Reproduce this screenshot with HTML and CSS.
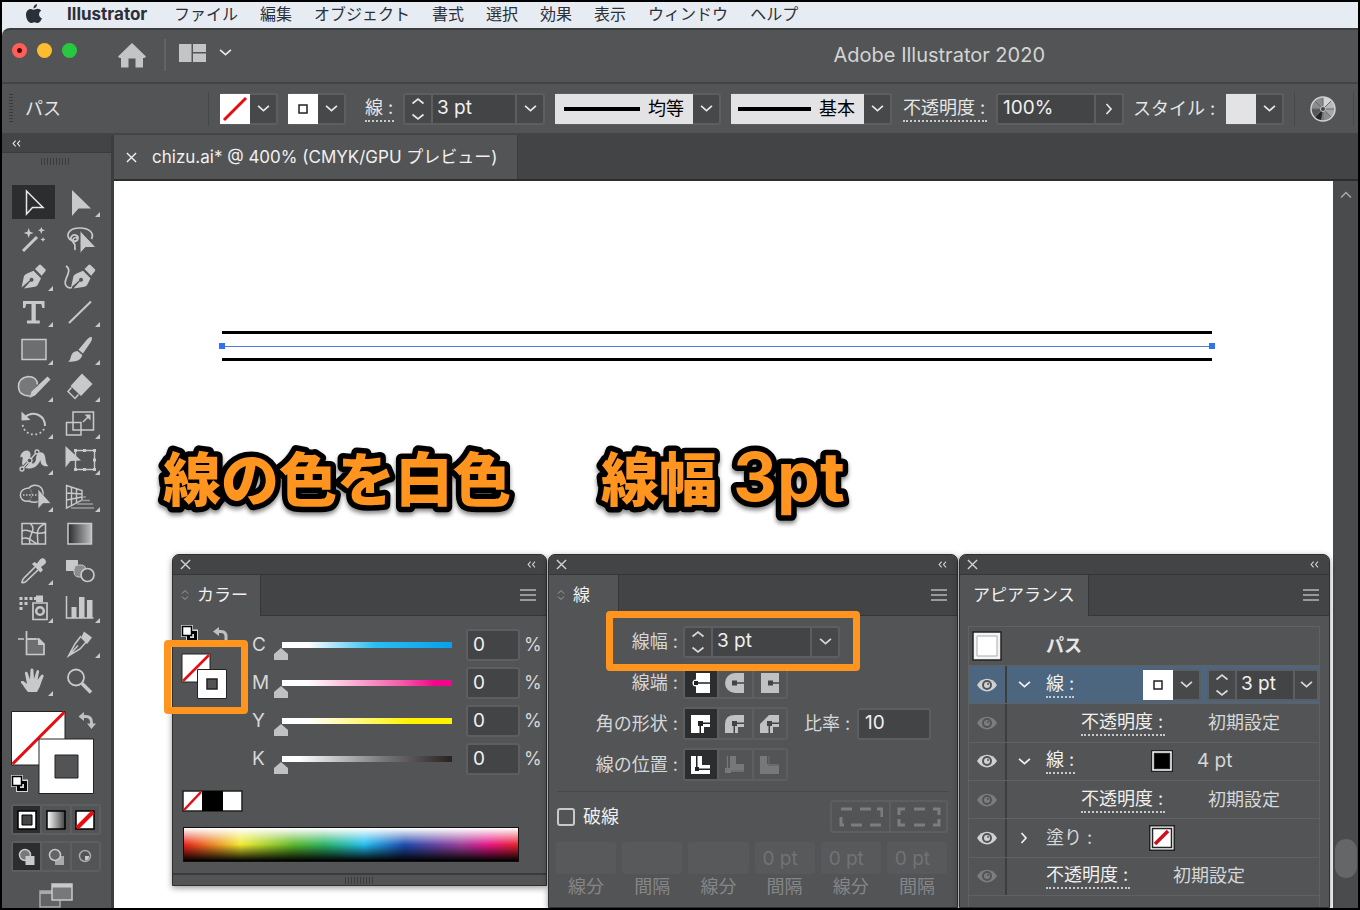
FILE: index.html
```html
<!DOCTYPE html>
<html lang="ja">
<head>
<meta charset="utf-8">
<title>Adobe Illustrator 2020</title>
<link rel="stylesheet" href="styles.css">
</head>
<body>
<svg class="defs" aria-hidden="true">
  <defs>
    <linearGradient id="gray"><stop offset="0" stop-color="#2a2b2c"/><stop offset="1" stop-color="#bdbebf"/></linearGradient>
    <linearGradient id="white-black"><stop offset="0" stop-color="#fff"/><stop offset="1" stop-color="#444"/></linearGradient>
    <symbol id="down" viewBox="0 0 12 8"><path d="M1 1.500 6 6l5-4.500" fill="none" stroke="currentColor" stroke-width="1.600"/></symbol>
    <symbol id="right" viewBox="0 0 8 12"><path d="M1.500 1 6 6l-4.500 5" fill="none" stroke="currentColor" stroke-width="1.700"/></symbol>
    <symbol id="step" viewBox="0 0 14 24"><path d="M1.500 6.500 7 2l5.500 4.500M1.500 17.500 7 22l5.500-4.500" fill="none" stroke="currentColor" stroke-width="1.700"/></symbol>
    <symbol id="close" viewBox="0 0 12 12"><path d="m1 1 10 10M11 1 1 11" stroke="currentColor" stroke-width="1.500"/></symbol>
    <symbol id="fold" viewBox="0 0 10 8"><path d="M4 .8 1.200 4 4 7.200M9 .8 6.200 4 9 7.200" fill="none" stroke="currentColor" stroke-width="1.300"/></symbol>
    <symbol id="menu" viewBox="0 0 16 12"><path d="M0 1h16M0 6h16M0 11h16" stroke="currentColor" stroke-width="1.500"/></symbol>
    <symbol id="sort" viewBox="0 0 8 12"><path d="M1 4.500 4 1.500l3 3M1 7.500l3 3 3-3" fill="none" stroke="currentColor"/></symbol>
    <symbol id="eye" viewBox="0 0 20 14"><path d="M0 7C5-1.500 15-1.500 20 7 15 15.500 5 15.500 0 7Z" fill="currentColor"/><circle cx="10" cy="7" r="5" fill="#535456"/><circle cx="10" cy="7" r="3" fill="currentColor"/><circle cx="11" cy="6" r="1" fill="#535456"/></symbol>
    <symbol id="corner" viewBox="0 0 5 5"><path d="M5 0v5H0z" fill="#c8c9ca"/></symbol>
    <symbol id="swap" viewBox="0 0 18 18"><path d="M5 4.500h3c4 0 5.500 2 5.500 6V13" fill="none" stroke="#bfc0c1" stroke-width="3"/><path d="M6 0v9L.5 4.500zM9 11.500h9L13.500 17z" fill="#bfc0c1"/></symbol>
    <symbol id="default" viewBox="0 0 17 17"><path d="M0 0h12v4.500h5V17H5v-5H0z" fill="#d6d7d8"/><path d="M6 6h10v10H6z" fill="#000"/><path d="M9 9h4v4H9z" fill="#d6d7d8"/><path d="M1.500 1.500h9v9h-9z" fill="#fff" stroke="#000" stroke-width="1.500"/></symbol>
    <symbol id="fillstroke" viewBox="0 0 84 84"><path d="M.5.500H54V54H.5z" fill="#fff" stroke="#222"/><path d="m1.500 53 52-52" stroke="#e80b0f" stroke-width="3"/><path d="M28 28h54.500v54.500H28z" fill="#fff" stroke="#222"/><path d="M44 44h23v23H44z" fill="#535456" stroke="#222"/></symbol>
    <symbol id="pen" viewBox="0 0 26 26"><path d="M1 24.500 3.500 13q.8-1.500 3-2.500L13 7.800l7.500 7.500-3 6q-1 2-3 2.500L3.500 25.500l6.300-7q3 .8 3.300-1.500-.2-2.500-2.500-2.200-2 .5-1.500 2.700z" fill="#c8c9ca"/><path d="m14.500 6 4-4q1-.8 2 0l4.300 4.300q.8 1 0 2l-3.600 4.500z" fill="#c8c9ca"/></symbol>
  </defs>
</svg>

<div class="frame">
  <nav class="menubar">
    <svg class="apple" viewBox="0 0 16 20"><path d="M11 0c.2 2.500-1.700 4.400-3.500 4.400C7.300 2.200 9 .3 11 0ZM8 5.800c1 0 2-1 3.700-1 1.500 0 2.800.8 3.500 2-3.200 2-2.600 6.300.7 7.500-.8 2.200-2.400 4.700-4.200 4.700-1.200 0-1.700-.8-3.300-.8s-2.200.8-3.300.8C2.700 19 0 15 0 10.800 0 7.200 2.200 4.900 4.700 4.900c1.500 0 2.300.9 3.300.9Z" fill="#2b2f3a"/></svg>
    <a class="app" href="#">Illustrator</a><a href="#">ファイル</a><a href="#">編集</a><a href="#">オブジェクト</a><a href="#">書式</a><a href="#">選択</a><a href="#">効果</a><a href="#">表示</a><a href="#">ウィンドウ</a><a href="#">ヘルプ</a>
  </nav>

  <div class="window">
    <header class="titlebar">
      <div class="lights"><button class="red" aria-label="閉じる"></button><button class="yellow" aria-label="最小化"></button><button class="green" aria-label="拡大"></button></div>
      <button class="home" aria-label="ホーム"><svg width="28" height="25" viewBox="0 0 28 25"><path d="M14 0 28 13.500 26.500 15H25v9.500h-7.500v-9h-7v9H3V15H1.500L0 13.500z" fill="#c3c4c5"/></svg></button>
      <button class="layout" aria-label="ワークスペース"><svg width="27" height="18" viewBox="0 0 27 18"><path d="M0 0h12.500v18H0zM14 0h13v8H14zM14 9.500h13V18H14z" fill="#c3c4c5"/></svg><svg class="down"><use href="#down"/></svg></button>
      <h1>Adobe Illustrator 2020</h1>
    </header>

    <div class="control">
      <span class="vgrip"></span>
      <span class="kind">パス</span>
      <div class="combo"><svg class="chip" viewBox="0 0 30 30"><path d="M0 0h30v30H0z" fill="#fff"/><path d="M4 26 26 4" stroke="#e80b0f" stroke-width="3"/></svg><button aria-label="塗り"><svg class="down"><use href="#down"/></svg></button></div>
      <div class="combo gap"><svg class="chip" viewBox="0 0 30 30"><path d="M0 0h30v30H0z" fill="#fff"/><path d="M11 11h8v8h-8z" fill="none" stroke="#222" stroke-width="1.500"/></svg><button aria-label="線の色"><svg class="down"><use href="#down"/></svg></button></div>
      <label class="dotted weight-label" for="weight">線 :</label>
      <div class="combo"><button aria-label="増減"><svg class="step"><use href="#step"/></svg></button><input class="w86" id="weight" value="3 pt"><button aria-label="線幅の一覧"><svg class="down"><use href="#down"/></svg></button></div>
      <div class="combo gap"><span class="profile"><i></i>均等</span><button aria-label="プロファイル"><svg class="down"><use href="#down"/></svg></button></div>
      <div class="combo gap"><span class="profile brush"><i></i>基本</span><button aria-label="ブラシ"><svg class="down"><use href="#down"/></svg></button></div>
      <label class="dotted opacity-label" for="opacity">不透明度 :</label>
      <div class="combo"><input class="w98" id="opacity" value="100%"><button aria-label="不透明度の一覧"><svg class="right"><use href="#right"/></svg></button></div>
      <span class="style-label">スタイル :</span>
      <div class="combo"><svg class="chip" viewBox="0 0 30 30"><path d="M0 0h30v30H0z" fill="#e3e3e5"/></svg><button aria-label="スタイル"><svg class="down"><use href="#down"/></svg></button></div>
      <button class="wheel" aria-label="オブジェクトを再配色"><svg width="26" height="26" viewBox="0 0 26 26"><circle cx="13" cy="13" r="12" fill="#8b8c8d"/><path d="M13 13 13 1a12 12 0 0 1 8.500 3.500z" fill="#d4d5d6"/><path d="m13 13 8.500-8.500A12 12 0 0 1 25 13z" fill="#b7b8b9"/><path d="M13 13H25a12 12 0 0 1-4 9z" fill="#a5a6a7"/><path d="M13 13 4 21a12 12 0 0 0 7 4z" fill="#252627"/><path d="M13 13 1 13a12 12 0 0 0 3 8z" fill="#555657"/><path d="M13 1v24M1 13h24M4.500 4.500l17 17M4.500 21.500l17-17" stroke="#66686a"/><circle cx="13" cy="13" r="12" fill="none" stroke="#d0d1d2" stroke-width="1.500"/><circle cx="13" cy="13" r="2.500" fill="#444" stroke="#ccc"/></svg></button>
    </div>

    <div class="main">
      <aside class="tools">
        <button class="collapse" aria-label="折りたたむ"><svg class="fold"><use href="#fold"/></svg></button>
        <span class="hgrip"></span>
        <div class="toolgrid">
          <button class="on" aria-label="選択"><svg viewBox="0 0 46 36"><path d="M16.500 7v23l6-6.500h10.500z" fill="none" stroke="#e8e8e8" stroke-width="1.500"/></svg></button>
          <button aria-label="ダイレクト選択"><svg viewBox="0 0 46 36"><path d="M15 6v26l6.500-7.500H34z" fill="#c8c9ca"/><use href="#corner" x="38" y="28" width="5" height="5"/></svg></button>
          <button aria-label="自動選択"><svg viewBox="0 0 46 36"><path d="m13 30 14-14" stroke="#c8c9ca" stroke-width="3"/><path d="m18.700 7 1.300 3.700 3.700 1.300-3.700 1.300-1.300 3.700-1.300-3.700-3.700-1.300 3.700-1.300zM31.300 6l1 2.300 2.700 1-2.700 1-1 2.700-1-2.700-2.300-1 2.300-1zM33 16l.8 1.800 1.800.7-1.800.7L33 21l-.8-1.800-1.800-.7 1.800-.7z" fill="#c8c9ca"/></svg></button>
          <button aria-label="なげなわ"><svg viewBox="0 0 46 36"><path d="M34.500 18c3-6-2-11-12-11-9 0-13 5-11 9.500s9 4.500 9.500 1-4.500-5-6.500-2 1 6 4 5 2.500-4 0-4-4 4-1.500 6-.5 4 1.500 6.500" fill="none" stroke="#c8c9ca" stroke-width="1.700"/><path d="M23 9.500v23l5.500-6H39z" fill="#c8c9ca" stroke="#535456"/></svg></button>
          <button aria-label="ペン"><svg viewBox="0 0 46 36"><use href="#pen" x="10.500" y="5" width="26" height="26"/><use href="#corner" x="38" y="28" width="5" height="5"/></svg></button>
          <button aria-label="曲線"><svg viewBox="0 0 46 36"><use href="#pen" x="13" y="5" width="26" height="26"/><path d="M9 8c5 3 2 8 0 13s0 10 6 8.500" fill="none" stroke="#c8c9ca" stroke-width="1.700"/></svg></button>
          <button aria-label="文字"><svg viewBox="0 0 46 36"><path d="M13 7h21.500v7h-2.200l-1-4h-5.500v16.500h4v3H17v-3h4.500V10H16.200l-1 4H13z" fill="#c8c9ca"/><use href="#corner" x="38" y="28" width="5" height="5"/></svg></button>
          <button aria-label="直線"><svg viewBox="0 0 46 36"><path d="m12 29 22-21.500" stroke="#c8c9ca" stroke-width="2"/><use href="#corner" x="38" y="28" width="5" height="5"/></svg></button>
          <button aria-label="長方形"><svg viewBox="0 0 46 36"><path d="M12 8.500h24v20H12z" fill="#6d6e6f" stroke="#c8c9ca" stroke-width="1.500"/><use href="#corner" x="38" y="29" width="5" height="5"/></svg></button>
          <button aria-label="ブラシ"><svg viewBox="0 0 46 36"><path d="M34.500 6c1 1 .5 3-1 5.500L26 22.500l-4.500-3.800L30 8.500Q33.500 5 34.500 6zM20.500 20l4.700 4c-.5 5-7 7.500-14.200 6.500 3-1.500 2-4 4-7.500 1.500-2.300 3.500-3 5.500-3z" fill="#c8c9ca"/><use href="#corner" x="38" y="29" width="5" height="5"/></svg></button>
          <button aria-label="Shaper"><svg viewBox="0 0 46 36"><path d="M20 28q-11 0-11.500-9T18 8.500q9 0 9.500 8" fill="#77787a" stroke="#c8c9ca" stroke-width="1.500"/><path d="m37.500 8.500 3 3L25 27.500l-5.500 2.500 2-6.500z" fill="#c8c9ca"/><use href="#corner" x="38" y="29" width="5" height="5"/></svg></button>
          <button aria-label="消しゴム"><svg viewBox="0 0 46 36"><path d="m25 5.500 10.500 10.500L24 28 13.500 18z" fill="#c8c9ca"/><path d="m14.500 19.500-3.500 4 7 7 3.500-4" fill="none" stroke="#c8c9ca" stroke-width="1.500"/><use href="#corner" x="38" y="29" width="5" height="5"/></svg></button>
          <button aria-label="回転"><svg viewBox="0 0 46 36"><path d="M15 12c8-7 20-2 20 9" fill="none" stroke="#c8c9ca" stroke-width="2"/><path d="M11.500 6.500v9l9-.5z" fill="#c8c9ca"/><path d="M34 24c-4 8-20 8-21.500-5" fill="none" stroke="#c8c9ca" stroke-width="1.800" stroke-dasharray="1.800 2.600"/><use href="#corner" x="38" y="29" width="5" height="5"/></svg></button>
          <button aria-label="拡大・縮小"><svg viewBox="0 0 46 36"><path d="M16 7h20.500v18H16zM9.500 17.500H24V30H9.500zM26 17l6-6" fill="none" stroke="#c8c9ca" stroke-width="1.500"/><path d="M27.500 9.500H33.500v6z" fill="#c8c9ca"/><use href="#corner" x="38" y="29" width="5" height="5"/></svg></button>
          <button aria-label="線幅"><svg viewBox="0 0 46 36"><path d="M10.500 17c-1-6 7-10 9.500-5.500 1.500 3-1 7 1 10 2 2.500 5 0 5-4s4-8.500 7.500-5c3 3 1 10 5 12.500-5 1-8-1-8-6-3 7-8 9-12.500 8.500S11 24 12.500 19c.8-3-1-4.500-2-2z" fill="#c8c9ca"/><path d="m12 28 15-17" stroke="#535456" stroke-width="3"/><path d="m12 28 15-17" stroke="#c8c9ca" stroke-width="1.300"/><g fill="#535456" stroke="#c8c9ca" stroke-width="1.300"><circle cx="12" cy="28" r="2"/><circle cx="19.500" cy="19.500" r="2.500"/><circle cx="27" cy="11" r="2"/></g><use href="#corner" x="38" y="29" width="5" height="5"/></svg></button>
          <button aria-label="自由変形"><svg viewBox="0 0 46 36"><path d="M18.500 9.500h19v19h-19z" fill="none" stroke="#c8c9ca" stroke-width="1.400"/><path d="M17 8h3v3h-3zM26 8h3v3h-3zM36 8h3v3h-3zM36 17.500h3v3h-3zM36 27h3v3h-3zM26 27h3v3h-3zM17 27h3v3h-3z" fill="#c8c9ca"/><path d="M8.500 5v21.500l5-6.500 10.500-.5z" fill="#c8c9ca"/><use href="#corner" x="38" y="29" width="5" height="5"/></svg></button>
          <button aria-label="シェイプ形成"><svg viewBox="0 0 46 36"><path d="M19 10c4-5 13-3 14 4s-6 13-14 9C8 25 7 10 19 10z" fill="none" stroke="#c8c9ca" stroke-width="1.500"/><path d="M19 10q6 6 0 13" fill="none" stroke="#999a9b" stroke-dasharray="2 1"/><path d="M13 17h15" stroke="#c8c9ca" stroke-width="1.500" stroke-dasharray="1.500 1.500"/><path d="M28 11v20l5-5.500h8z" fill="#c8c9ca" stroke="#535456" stroke-width=".7"/><use href="#corner" x="38" y="29" width="5" height="5"/></svg></button>
          <button aria-label="遠近グリッド"><svg viewBox="0 0 46 36"><path d="m9.500 7.500 15.500 5v9.500L9.500 30zM14.500 9v18.500M19.500 10.500V25M9.500 15l15.500 1M9.500 22l15.500-3" fill="none" stroke="#c8c9ca" stroke-width="1.400"/><path d="M26 19h3M24 22.500h9M20 26h16M14 30h23" stroke="#999a9b" stroke-width="1.500"/><use href="#corner" x="38" y="29" width="5" height="5"/></svg></button>
          <button aria-label="メッシュ"><svg viewBox="0 0 46 36"><path d="M12 8.500h23.500v20.500H12zM12 16c7-4 11 6 23.500 1M12 24c5-4 12 4 16 5M20 8.500c8 6-3 12 0 20.500M35 9c-9 3-8 9-7 20" fill="none" stroke="#c8c9ca" stroke-width="1.500"/></svg></button>
          <button aria-label="グラデーション"><svg viewBox="0 0 46 36"><path d="M11 8.500h23.500V29H11z" fill="url(#gray)" stroke="#c8c9ca" stroke-width="1.500"/></svg></button>
          <button aria-label="スポイト"><svg viewBox="0 0 46 36"><path d="m25 15-11 11q-2 2-2 4.500 2.500.5 4.500-1.500L28 18" fill="none" stroke="#c8c9ca" stroke-width="1.700"/><path d="m22 12 2.500-2 2.500 1.500 3-4Q33 5 35 7.500t0 4.500L31 15l2 3-2.500 2.500z" fill="#c8c9ca"/><use href="#corner" x="38" y="28" width="5" height="5"/></svg></button>
          <button aria-label="ブレンド"><svg viewBox="0 0 46 36"><path d="M9 8h12v11H9z" fill="#c8c9ca"/><rect x="17" y="13" width="12" height="12" rx="4.500" fill="#8b8c8d" stroke="#c8c9ca"/><circle cx="30.500" cy="23" r="6.500" fill="#535456" stroke="#c8c9ca" stroke-width="1.700"/></svg></button>
          <button aria-label="シンボルスプレー"><svg viewBox="0 0 46 36"><path d="M23 14h14v16.500H23z" fill="none" stroke="#c8c9ca" stroke-width="1.700"/><path d="M24 8h2V6.500h7V13h-7v-2h-2z" fill="#c8c9ca"/><circle cx="30" cy="22" r="3.800" fill="none" stroke="#c8c9ca" stroke-width="2.500"/><path d="M9.500 8h3v3h-3zM14.500 8h3v3h-3zM19.500 8h3v3h-3zM9.500 13h3v3h-3zM14.500 13h3v3h-3zM9.500 18h3v3h-3z" fill="#c8c9ca"/><use href="#corner" x="38" y="29" width="5" height="5"/></svg></button>
          <button aria-label="棒グラフ"><svg viewBox="0 0 46 36"><path d="M9.500 7v22h27" fill="none" stroke="#c8c9ca" stroke-width="1.500"/><path d="M14.500 18h5v11h-5zM22 8h5.500v21H22zM30 11h5.500v18H30z" fill="#c8c9ca"/><use href="#corner" x="38" y="29" width="5" height="5"/></svg></button>
          <button aria-label="アートボード"><svg viewBox="0 0 46 36"><path d="M16.500 6v23.500h17.500V19l-5-5H16.500" fill="#6d6e6f" stroke="#c8c9ca" stroke-width="1.700"/><path d="M8 14h6M18 14h8" stroke="#c8c9ca" stroke-width="1.500"/><path d="M28 13v7h7z" fill="#c8c9ca"/></svg></button>
          <button aria-label="スライス"><svg viewBox="0 0 46 36"><path d="M24 11 18 19 11.500 31 23 24l6.500-7.500M12 30.500l9-10" fill="none" stroke="#c8c9ca" stroke-width="1.500"/><path d="m27 6.500 8 6-5 6.500-6-6z" fill="#c8c9ca"/><use href="#corner" x="38" y="28" width="5" height="5"/></svg></button>
          <button aria-label="手のひら"><svg viewBox="0 0 46 36"><path d="M18 30c-3-3-4.500-7-7-9-.8-2 1.500-2.500 3-1.500l3 2.500L15 11.500c-.5-2 2-2.500 2.700-.5L20 17.500 20.500 8c.2-2 2.700-2 2.900 0L24 17l2.500-8c.8-1.800 3-1 2.600.8L27.500 18l3.700-5c1.200-1.300 3 0 2.300 1.700-2.500 5-3 9.500-5 12.300l-1.500 3z" fill="#c8c9ca"/><use href="#corner" x="38" y="29" width="5" height="5"/></svg></button>
          <button aria-label="ズーム"><svg viewBox="0 0 46 36"><circle cx="19" cy="15.500" r="8" fill="none" stroke="#c8c9ca" stroke-width="1.800"/><path d="m25 21.500 9 9" stroke="#c8c9ca" stroke-width="3.500"/></svg></button>
        </div>
        <svg class="swatchset" viewBox="0 0 92 86"><use href="#fillstroke" x="1" y="1" width="84" height="84"/><use href="#swap" x="68" y="2" width="18" height="18"/><use href="#default" x="1" y="65" width="17" height="17"/></svg>
        <div class="triple">
          <button class="on" aria-label="カラー"><svg viewBox="0 0 20 20"><path d="M1 1h18v18H1z" fill="#fff" stroke="#000" stroke-width="1.500"/><path d="M5 5h10v10H5z" fill="#444" stroke="#000"/></svg></button>
          <button aria-label="グラデーション"><svg viewBox="0 0 20 20"><path d="M1 1h18v18H1z" fill="url(#white-black)" stroke="#000" stroke-width="1.500"/></svg></button>
          <button aria-label="なし"><svg viewBox="0 0 20 20"><path d="M1 1h18v18H1z" fill="#fff" stroke="#000" stroke-width="1.500"/><path d="M2 18 18 2" stroke="#e80b0f" stroke-width="4"/></svg></button>
        </div>
        <div class="triple modes">
          <button class="on" aria-label="標準描画"><svg viewBox="0 0 20 20"><circle cx="8" cy="8" r="5.500" fill="#77787a" stroke="#c8c9ca" stroke-width="1.500"/><path d="M8.500 9h9v9h-9z" fill="#c8c9ca"/></svg></button>
          <button aria-label="背面描画"><svg viewBox="0 0 20 20"><path d="M9 9h9v9H9z" fill="#a8a9aa"/><circle cx="9" cy="8" r="5.500" fill="#636465" stroke="#c8c9ca" stroke-width="1.500"/></svg></button>
          <button aria-label="内側描画"><svg viewBox="0 0 20 20"><circle cx="10" cy="9" r="5.500" fill="none" stroke="#a8a9aa" stroke-width="1.500"/><path d="M10 9h4v2q-1 2-4 2.500z" fill="#c8c9ca"/></svg></button>
        </div>
        <button class="screen" aria-label="スクリーンモード"><svg width="34" height="25" viewBox="0 0 34 25"><path d="M1 8h20v16H1z" fill="#636465" stroke="#a8a9aa" stroke-width="1.500"/><path d="M1 8h20v3H1z" fill="#a8a9aa"/><path d="M13 1h20v16H13z" fill="#77787a" stroke="#c8c9ca" stroke-width="1.500"/><path d="M13 1h20v3.500H13z" fill="#c8c9ca"/></svg></button>
      </aside>

      <section class="doc">
        <div class="doctabs"><div class="doctab"><button aria-label="閉じる"><svg class="close"><use href="#close"/></svg></button><span>chizu.ai* @ 400% (CMYK/GPU プレビュー)</span></div></div>
        <div class="docbody">
          <div class="canvas">
            <div class="art"><i class="anchor"></i><i class="segment"></i><i class="anchor"></i></div>
            <div class="notes">
              <svg width="350" height="80"><text x="0" y="61">線の色を白色</text></svg>
              <svg width="260" height="80"><text x="0" y="61">線幅<tspan class="latin"> 3pt</tspan></text></svg>
            </div>

            <div class="panels">
              <section class="panel color">
                <div class="panelbar"><button aria-label="閉じる"><svg class="close"><use href="#close"/></svg></button><button aria-label="折りたたむ"><svg class="fold"><use href="#fold"/></svg></button></div>
                <div class="paneltabs"><h2><svg class="sort"><use href="#sort"/></svg>カラー</h2><button aria-label="メニュー"><svg class="menu"><use href="#menu"/></svg></button></div>
                <div class="mixer">
                  <div class="mixswatch"><div><svg width="17" height="17"><use href="#default"/></svg><svg width="16" height="16" viewBox="0 0 16 16"><path d="M5 6.500h3q5 0 5 5V16" fill="none" stroke="#bfc0c1" stroke-width="3"/><path d="M6 2v9L0 6.500z" fill="#bfc0c1"/></svg></div>
                    <svg width="47" height="47" viewBox="0 0 47 47"><path d="M1 1h28v28H1z" fill="#fff" stroke="#222"/><path d="M2 28 28 2" stroke="#e80b0f" stroke-width="2.500"/><path d="M16.500 16.500h29v29h-29z" fill="#fff" stroke="#222"/><path d="M26 26h10v10H26z" fill="#535456" stroke="#222" stroke-width="1.500"/></svg></div>
                  <div class="channels">
                    <div><label for="c">C</label><input type="range" class="c" value="0" aria-label="C"><input id="c" value="0"><span>%</span></div>
                    <div><label for="m">M</label><input type="range" class="m" value="0" aria-label="M"><input id="m" value="0"><span>%</span></div>
                    <div><label for="y">Y</label><input type="range" class="y" value="0" aria-label="Y"><input id="y" value="0"><span>%</span></div>
                    <div><label for="k">K</label><input type="range" class="k" value="0" aria-label="K"><input id="k" value="0"><span>%</span></div>
                  </div>
                </div>
                <svg class="basics" width="61" height="22" viewBox="0 0 61 22"><path d="M1 1h59v20H1z" fill="#fff" stroke="#222" stroke-width="1.500"/><path d="M2 20 19 2" stroke="#e80b0f" stroke-width="2.500"/><path d="M20 1h21v20H20z" fill="#000"/></svg>
                <div class="spectrum"></div>
                <div class="resize"><span class="hgrip"></span></div>
              </section>

              <section class="panel stroke">
                <div class="panelbar"><button aria-label="閉じる"><svg class="close"><use href="#close"/></svg></button><button aria-label="折りたたむ"><svg class="fold"><use href="#fold"/></svg></button></div>
                <div class="paneltabs"><h2><svg class="sort"><use href="#sort"/></svg>線</h2><button aria-label="メニュー"><svg class="menu"><use href="#menu"/></svg></button></div>
                <div class="strokegrid">
                  <label for="sw">線幅 :</label>
                  <div class="combo"><button aria-label="増減"><svg class="step"><use href="#step"/></svg></button><input class="w101" id="sw" value="3 pt"><button aria-label="一覧"><svg class="down"><use href="#down"/></svg></button></div>
                  <span>線端 :</span>
                  <div class="trio">
                    <button class="on" aria-label="線端なし"><svg viewBox="0 0 20 20"><path d="M5 0h14v20H5v-6.500a3.500 3.500 0 0 1 0-7z" fill="#fff"/><path d="M3 8h4v1.300h12v1.400H7V12H3z" fill="#222"/></svg></button>
                    <button aria-label="丸型線端"><svg viewBox="0 0 20 20"><path d="M19 0H10a10 10 0 0 0 0 20h9z" fill="#c0c1c2"/><path d="M7 7.500h5v1.800h7v1.400h-7v1.800H7z" fill="#444"/></svg></button>
                    <button aria-label="突出線端"><svg viewBox="0 0 20 20"><path d="M1 0h18v20H1z" fill="#c0c1c2"/><path d="M8 7.500h5v1.800h6v1.400h-6v1.800H8z" fill="#444"/></svg></button>
                  </div>
                  <span>角の形状 :</span>
                  <div class="joinrow"><div class="trio">
                    <button class="on" aria-label="マイター結合"><svg viewBox="0 0 20 20"><path d="M0 1h19v12h-6v6H0z" fill="#fff"/><path d="M7 7h5v1.500h7v1.400h-7V12h-2v7H8.500v-7H7z" fill="#222"/></svg></button>
                    <button aria-label="ラウンド結合"><svg viewBox="0 0 20 20"><path d="M0 19v-9q0-9 10-9h9v12h-6v6z" fill="#c0c1c2"/><path d="M7 7h5v1.500h7v1.400h-7V12h-2v7H8.500v-7H7z" fill="#444"/></svg></button>
                    <button aria-label="ベベル結合"><svg viewBox="0 0 20 20"><path d="M0 19v-9l9-9h10v12h-6v6z" fill="#c0c1c2"/><path d="M7 7h5v1.500h7v1.400h-7V12h-2v7H8.500v-7H7z" fill="#444"/></svg></button>
                  </div><label for="ratio">比率 :</label><input id="ratio" value="10"></div>
                  <span>線の位置 :</span>
                  <div class="trio">
                    <button class="on" aria-label="中央"><svg viewBox="0 0 20 20"><path d="M0 1h11v9h8v9H0z" fill="#fff"/><path d="M5 1h1.500v11H8v1.500h11V15H8v1H4v-4h1z" fill="#222"/></svg></button>
                    <button aria-label="内側" disabled><svg viewBox="0 0 20 20"><path d="M5 1h6v8h8v6H5z" fill="#77787a"/><path d="M2.500 1v15H19" fill="none" stroke="#77787a" stroke-width="1.300"/><path d="M0 13h6v5H0z" fill="#77787a"/></svg></button>
                    <button aria-label="外側" disabled><svg viewBox="0 0 20 20"><path d="M0 1h7v8h12v10H0z" fill="#77787a"/><path d="M9 1v9h10" fill="none" stroke="#656667" stroke-width="1.500"/></svg></button>
                  </div>
                </div>
                <div class="dash">
                  <label><input type="checkbox">破線</label>
                  <div class="dashbuttons"><button aria-label="正確な長さ" disabled><svg viewBox="0 0 44 20"><path d="M2 19v-9M1 18h4M2 2h11M21 2h11M38 2h5v8M12 18h11M31 18h11" fill="none" stroke="#7c7d7f" stroke-width="3"/></svg></button><button aria-label="コーナーに整列" disabled><svg viewBox="0 0 44 20"><path d="M8 2H2v6M2 12v6h6M17 2h11M17 18h11M36 2h6v6M42 12v6h-6" fill="none" stroke="#7c7d7f" stroke-width="3"/></svg></button></div>
                </div>
                <div class="dashfields">
                  <label><input disabled value="">線分</label><label><input disabled value="">間隔</label><label><input disabled value="">線分</label><label><input disabled value="0 pt">間隔</label><label><input disabled value="0 pt">線分</label><label><input disabled value="0 pt">間隔</label>
                </div>
              </section>

              <section class="panel appearance">
                <div class="panelbar"><button aria-label="閉じる"><svg class="close"><use href="#close"/></svg></button><button aria-label="折りたたむ"><svg class="fold"><use href="#fold"/></svg></button></div>
                <div class="paneltabs"><h2>アピアランス</h2><button aria-label="メニュー"><svg class="menu"><use href="#menu"/></svg></button></div>
                <div class="items">
                  <div class="target"><svg width="30" height="30" viewBox="0 0 30 30"><path d="M1 1h28v28H1z" fill="#f4f4f5" stroke="#222" stroke-width="1.500"/><path d="M5 5h20v20H5z" fill="#fff" stroke="#aaa"/></svg><b>パス</b></div>
                  <ul>
                    <li class="selected"><button class="see" aria-label="表示"><svg class="eye"><use href="#eye"/></svg></button><button class="toggle" aria-label="開閉"><svg class="down"><use href="#down"/></svg></button><a class="dotted" href="#">線 :</a>
                      <div class="combo push"><svg class="chip" viewBox="0 0 30 30"><path d="M0 0h30v30H0z" fill="#fff"/><path d="M11 11h8v8h-8z" fill="none" stroke="#222" stroke-width="1.500"/></svg><button aria-label="線の色"><svg class="down"><use href="#down"/></svg></button></div>
                      <div class="combo"><button aria-label="増減"><svg class="step"><use href="#step"/></svg></button><input class="w60" aria-label="線幅" value="3 pt"><button class="narrow" aria-label="一覧"><svg class="down"><use href="#down"/></svg></button></div></li>
                    <li><button class="see dim" aria-label="表示"><svg class="eye"><use href="#eye"/></svg></button><a class="dotted deep" href="#">不透明度 :</a><span class="value">初期設定</span></li>
                    <li><button class="see" aria-label="表示"><svg class="eye"><use href="#eye"/></svg></button><button class="toggle" aria-label="開閉"><svg class="down"><use href="#down"/></svg></button><a class="dotted name" href="#">線 :</a><svg class="paint" viewBox="0 0 26 26"><path d="M4 4h18v18H4z" fill="#000" stroke="#222" stroke-width="4"/><path d="M4 4h18v18H4z" fill="none" stroke="#fff" stroke-width="1.500"/></svg><span class="pt">4 pt</span></li>
                    <li><button class="see dim" aria-label="表示"><svg class="eye"><use href="#eye"/></svg></button><a class="dotted deep" href="#">不透明度 :</a><span class="value">初期設定</span></li>
                    <li><button class="see" aria-label="表示"><svg class="eye"><use href="#eye"/></svg></button><button class="toggle" aria-label="開閉"><svg class="right"><use href="#right"/></svg></button><span class="name">塗り :</span><svg class="paint" viewBox="0 0 26 26"><path d="M0 0h26v26H0z" fill="#222"/><path d="M1.500 1.500h23v23h-23z" fill="#fff"/><path d="M3.500 3.500h19v19h-19z" fill="#fff" stroke="#222" stroke-width="1.500"/><path d="M6 19 19 6" stroke="#d0101c" stroke-width="3.500"/></svg></li>
                    <li><button class="see dim" aria-label="表示"><svg class="eye"><use href="#eye"/></svg></button><a class="dotted shallow" href="#">不透明度 :</a><span class="value">初期設定</span></li>
                  </ul>
                </div>
              </section>
              <div class="mark mark-color"></div>
              <div class="mark mark-weight"></div>
            </div>
          </div>
          <div class="scroll"><svg width="12" height="8" viewBox="0 0 12 8"><path d="m1 6.500 5-5 5 5" fill="none" stroke="#a8a9aa" stroke-width="1.500"/></svg><i></i></div>
        </div>
      </section>
    </div>
  </div>
</div>
</body>
</html>
```
FILE: styles.css
```css
* { box-sizing: border-box; }
body { margin: 0; background: #000; color: #e6e6e7; font: 18px/24px Inter, "Noto Sans CJK JP", sans-serif; }
button { margin: 0; padding: 0; border: 0; background: none; color: inherit; font: inherit; display: flex; align-items: center; justify-content: center; flex: none; }
input { margin: 0; min-width: 0; color: #f0f0f0; font: inherit; font-size: 19px; background: #434446; border: 2px solid #5d5e60; border-radius: 3px; }
a { color: inherit; text-decoration: none; }
h1, h2 { margin: 0; font-weight: 400; }
svg { display: block; flex: none; }
.defs { position: absolute; width: 0; height: 0; }
.down { width: 13px; height: 9px; }
.right { width: 8px; height: 12px; }
.step { width: 14px; height: 24px; }
.close { width: 11px; height: 11px; }
.fold { width: 9px; height: 7px; }
.menu { width: 16px; height: 12px; color: #b5b6b7; }
.sort { width: 8px; height: 12px; color: #a0a1a2; }
.eye { width: 20px; height: 14px; }

.frame { height: 100vh; border: 2px solid #000; overflow: hidden; display: flex; flex-direction: column; background: #e7ebf2; }
.menubar { height: 26px; flex: none; display: flex; align-items: center; gap: 22px; padding: 0 0 3px 24px; font-size: 16px; color: #2b2f38; white-space: nowrap; }
.apple { width: 16px; height: 20px; }
.menubar .app { font-size: 17px; font-weight: 700; margin-left: 3px; width: 85px; }
.window { flex: 1; min-height: 0; display: flex; flex-direction: column; background: #535456; border-top: 2px solid #3c3d3f; border-radius: 8px 0 0 0; }

.titlebar { height: 52px; flex: none; display: flex; align-items: center; padding: 0 313px 2px 10px; }
.lights { display: flex; gap: 10px; margin-bottom: 10px; }
.lights button { width: 15px; height: 15px; border-radius: 50%; }
.red { background: radial-gradient(circle, #4b0806 0 2px, #fe5f57 3px); }
.yellow { background: #febc2e; }
.green { background: #28c840; }
.home { margin-left: 41px; padding-right: 18px; border-right: 2px solid #626365; height: 32px; }
.layout { margin-left: 13px; gap: 13px; margin-bottom: 5px; }
.titlebar h1 { margin-left: auto; font-size: 20px; color: #d3d4d5; }

.control { height: 53px; flex: none; display: flex; align-items: center; padding: 0 8px 0 7px; border-top: 2px solid #434446; border-bottom: 2px solid #434446; white-space: nowrap; }
.vgrip { flex: none; width: 4px; height: 30px; background: repeating-linear-gradient(#3a3b3d 0 1px, #535456 1px 3px); }
.kind { width: 184px; flex: none; margin: 0 11px 0 12px; border-right: 1px solid #474849; line-height: 34px; }
.combo { flex: none; display: flex; height: 32px; border: 2px solid #5d5e60; border-radius: 3px; background: #47484a; }
.combo.gap { margin-left: 10px; }
.combo button { width: 26px; }
.combo input { border: 0; border-radius: 0; border-left: 2px solid #5d5e60; border-right: 2px solid #5d5e60; padding: 0 0 2px 4px; }
.combo > :first-child:is(input) { border-left: 0; padding-left: 5px; }
.chip { width: 30px; height: 30px; margin: -1px 0 -1px -2px; }
.w86 { width: 86px; }
.w98 { width: 98px; }
.w101 { width: 101px; }
.w60 { width: 60px; }
.dotted { border-bottom: 2px dotted #c8c9ca; line-height: 24px; }
.control label, .style-label { flex: none; }
.weight-label { margin: 0 9px 0 19px; width: 29px; }
.opacity-label { margin: 0 9px 0 11px; width: 84px; }
.style-label { margin: 0 10px 0 9px; width: 83px; }
.profile { display: flex; align-items: center; gap: 8px; width: 138px; margin: -1px 0 -1px -2px; padding-left: 9px; background: #e3e3e5; color: #000; }
.profile i { width: 76px; height: 4px; background: #000; }
.profile.brush { width: 133px; padding-left: 7px; }
.profile.brush i { width: 73px; }
.wheel { height: 34px; margin-left: 10px; padding: 0 17px 0 15px; border-left: 1px solid #474849; border-right: 1px solid #474849; }

.main { flex: 1; min-height: 0; display: flex; }
.tools { width: 112px; flex: none; display: flex; flex-direction: column; border-right: 3px solid #3c3d3f; }
.collapse { height: 18px; justify-content: flex-start; padding-left: 10px; background: #434446; border-bottom: 1px solid #3a3b3d; }
.hgrip { width: 30px; height: 7px; background: repeating-linear-gradient(90deg, #3a3b3d 0 1px, #535456 1px 3px); }
.tools > .hgrip { flex: none; margin: 5px 0 19px 39px; }
.toolgrid { flex: none; height: 515px; margin-left: 8px; display: grid; grid-template-columns: 47px 46px; grid-template-rows: repeat(14, 1fr); }
.toolgrid button { justify-content: flex-start; align-items: flex-start; }
.toolgrid svg { width: 46px; height: 36px; }
.toolgrid .on { background: linear-gradient(#2c2d2f, #2c2d2f) 2px 1px / 43px 34px no-repeat; }
.swatchset { width: 92px; height: 86px; margin: 11px 0 0 8px; }
.triple { display: flex; margin: 8px 0 0 9px; width: 90px; border: 2px solid #5d5e60; border-radius: 3px; }
.triple button { flex: 1; height: 27px; }
.triple button + button { border-left: 2px solid #5d5e60; }
.triple svg { width: 20px; height: 20px; }
.triple .on { background: #2c2d2f; }
.modes { margin-top: 6px; }
.screen { margin: 11px 0 0 37px; width: 34px; }

.doc { flex: 1; min-width: 0; display: flex; flex-direction: column; }
.doctabs { height: 46px; flex: none; display: flex; background: #434446; border-bottom: 2px solid #2c2d2f; }
.doctab { display: flex; align-items: center; gap: 15px; padding: 0 20px 0 12px; width: 404px; background: #535456; border-right: 1px solid #3a3b3d; white-space: nowrap; font-size: 17px; color: #f0f0f0; }
.docbody { flex: 1; min-height: 0; display: flex; }
.canvas { position: relative; flex: 1; min-width: 0; background: #fff; }
.art { display: flex; align-items: center; height: 30px; margin: 150px 118px 0 105px; border: solid #000; border-width: 3px 0; border-image: linear-gradient(90deg, #fff 3px, #000 3px calc(100% - 3px), #fff calc(100% - 3px)) 3 0; }
.anchor { width: 6px; height: 6px; background: #2f74ee; }
.segment { flex: 1; height: 1px; background: #4a80da; }
.notes { display: flex; gap: 88px; margin: 79px 0 0 49px; filter: drop-shadow(0 3px 2px #0007); }
.notes svg { overflow: visible; }
.notes text { font: 900 58px "Noto Sans CJK JP", sans-serif; fill: #ff951f; stroke: #000; stroke-width: 11px; stroke-linejoin: round; paint-order: stroke fill; }
.notes .latin { font: 700 68px Inter, sans-serif; }

.panels { position: absolute; left: 58px; top: 373px; bottom: 0; display: flex; gap: 1px; align-items: flex-start; }
.panel { background: #535456; border: 1px solid #2e2f31; border-radius: 7px 7px 0 0; box-shadow: 0 2px 6px #0006; overflow: hidden; }
.color { width: 375px; }
.stroke { width: 410px; height: 100%; }
.appearance { width: 371px; height: 100%; }
.panelbar { display: flex; justify-content: space-between; height: 20px; padding: 0 10px 0 7px; background: #434446; border-bottom: 1px solid #353638; color: #d0d1d2; }
.paneltabs { display: flex; justify-content: space-between; height: 41px; padding-right: 10px; background: #434446; border-bottom: 1px solid #353638; }
.paneltabs h2 { display: flex; align-items: center; gap: 8px; padding: 0 12px 2px 8px; height: 41px; background: #535456; border-right: 1px solid #353638; font-size: 17px; color: #f0f0f0; }
.stroke h2 { padding-right: 28px; }
.appearance h2 { padding-left: 13px; padding-right: 13px; }

.mixer { display: flex; margin: 9px 0 0 8px; }
.mixswatch { width: 70px; display: flex; flex-direction: column; gap: 11px; }
.mixswatch div { display: flex; gap: 15px; }
.channels { flex: 1; padding-top: 1px; }
.channels div { display: flex; align-items: center; height: 38px; }
.channels label { width: 22px; margin-left: 1px; font-size: 19px; color: #d6d7d8; }
.channels input:not([type]) { width: 54px; height: 32px; padding: 0 0 2px 5px; margin-left: 8px; }
.channels span { margin-left: 4px; color: #d6d7d8; }
input[type=range] { appearance: none; width: 184px; height: 32px; border: 0; border-radius: 0; background-color: transparent; background-position: 8px 13px; background-size: 170px 6px; background-repeat: no-repeat; }
input[type=range]::-webkit-slider-runnable-track { height: 32px; }
input[type=range]::-webkit-slider-thumb { appearance: none; width: 14px; height: 12px; margin-top: 19px; background: #c0c1c2; clip-path: polygon(50% 0, 100% 50%, 100% 100%, 0 100%, 0 50%); }
.c { background-image: linear-gradient(90deg, #fff 15%, #2bbdf0 55%, #08a0f0); }
.m { background-image: linear-gradient(90deg, #fff 15%, #f45caa 70%, #f3048b 90%); }
.y { background-image: linear-gradient(90deg, #fff 15%, #fff200 75%); }
.k { background-image: linear-gradient(90deg, #fff 10%, #777 60%, #2a2122); }
.basics { margin: 12px 0 0 9px; }
.spectrum { height: 35px; margin: 15px 27px 11px 10px; border: 1px solid #111; background: linear-gradient(#fff, #fff0 50%, #0000 50%, #000), linear-gradient(90deg, #e8241c, #f0ea30 17%, #5cb82c 33%, #2cb466 42%, #25bff0 54%, #1f4db0 66%, #a0409c 83%, #e8188a 91%, #e8242c); }
.resize { height: 12px; padding-top: 2px; border-top: 2px solid #3a3b3d; display: flex; justify-content: center; }

.strokegrid { display: grid; grid-template-columns: 121px 1fr; grid-auto-rows: 41px; align-items: center; column-gap: 5px; margin: 5px 8px 0; padding-bottom: 6px; border-bottom: 1px solid #474849; color: #d6d7d8; }
.strokegrid > label, .strokegrid > span { text-align: right; white-space: nowrap; }
.strokegrid .combo { width: 157px; }
.trio { display: flex; width: 105px; border: 2px solid #5d5e60; border-radius: 3px; }
.trio button { flex: 1; height: 29px; }
.trio button + button { border-left: 2px solid #5d5e60; }
.trio .on { background: #2c2d2f; }
.trio svg { width: 20px; height: 20px; }
.joinrow { display: flex; align-items: center; }
.joinrow label { margin: 0 8px 0 16px; width: 45px; white-space: nowrap; }
.joinrow input { width: 74px; height: 32px; padding: 0 0 2px 6px; }
.dash { display: flex; align-items: center; justify-content: space-between; margin: 8px 9px 9px 8px; color: #f0f0f0; }
.dash label { display: flex; align-items: center; gap: 8px; }
.dash input { appearance: none; width: 18px; height: 18px; background: none; border: 2px solid #c8c9ca; }
.dashbuttons { display: flex; border: 2px solid #5d5e60; border-radius: 3px; }
.dashbuttons button { width: 57px; height: 29px; }
.dashbuttons button + button { border-left: 2px solid #5d5e60; }
.dashbuttons svg { width: 44px; height: 20px; }
.dashfields { display: grid; grid-template-columns: repeat(6, 1fr); gap: 6px; margin: 0 10px 0 7px; color: #858688; text-align: center; }
.dashfields input { display: block; width: 100%; height: 32px; margin-bottom: 1px; padding: 0 0 0 8px; border: 0; background: #58595b; color: #727375; }

.items { margin: 10px 9px 0 8px; border: 1px solid #606163; height: 100%; }
.target { display: flex; align-items: center; gap: 44px; height: 38px; padding-left: 3px; }
.items ul { display: grid; grid-template-rows: repeat(6, 1fr); height: 231px; margin: 0; padding: 0; list-style: none; border-bottom: 1px solid #606163; }
.items li { display: flex; align-items: center; border-top: 1px solid #606163; min-height: 0; white-space: nowrap; color: #d6d7d8; }
.items a { color: #f0f0f0; }
.items .selected { background: #4d667f; }
.see { width: 38px; align-self: stretch; border-right: 2px solid #3c3d3f; color: #d0d1d2; }
.dim { color: #7c7d7f; }
.toggle { width: 12px; margin: 0 16px 0 11px; color: #f0f0f0; }
.push { margin: 0 6px 0 auto; }
.combo .narrow { width: 22px; }
.name { width: 51px; }
a.name { width: 29px; margin-right: 22px; }
.paint { width: 26px; height: 26px; margin: 0 22px 0 52px; }
.pt { font-size: 19px; }
.deep { width: 84px; margin-left: 74px; }
.shallow { width: 84px; margin-left: 39px; }
.value { margin-left: 43px; }

.mark { position: absolute; border: 7px solid #ff951f; border-radius: 4px; }
.mark-color { left: -8px; top: 86px; width: 84px; height: 74px; }
.mark-weight { left: 434px; top: 57px; width: 254px; height: 60px; }

.scroll { width: 25px; flex: none; display: flex; flex-direction: column; align-items: center; justify-content: space-between; padding: 10px 0 30px; background: #4a4b4d; }
.scroll i { width: 22px; height: 39px; border-radius: 11px; background: #656667; }
```
